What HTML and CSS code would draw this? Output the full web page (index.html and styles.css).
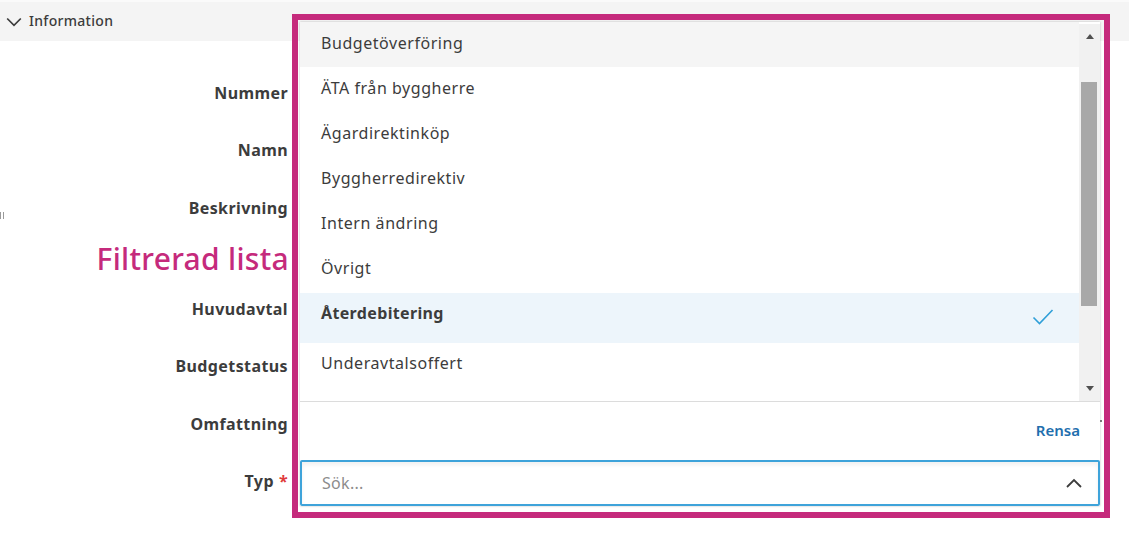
FILE: index.html
```html
<!DOCTYPE html>
<html lang="sv">
<head>
<meta charset="utf-8">
<title>Information</title>
<link rel="stylesheet" href="styles.css">
</head>
<body>
<div class="page">
  <div class="section-header">
    <svg class="chev" width="16" height="10" viewBox="0 0 16 10"><path d="M1.2 1.5 L8 8.3 L14.8 1.5" fill="none" stroke="#3c3c3c" stroke-width="1.7"/></svg>
    <span>Information</span>
  </div>
  <div class="handle"><i></i><i></i></div>
  <div class="form">
    <div class="row"><div class="label">Nummer</div></div>
    <div class="row"><div class="label">Namn</div></div>
    <div class="row tall">
      <div class="label">Beskrivning</div>
      <div class="annot">Filtrerad lista</div>
    </div>
    <div class="row"><div class="label">Huvudavtal</div></div>
    <div class="row"><div class="label">Budgetstatus</div></div>
    <div class="row"><div class="label">Omfattning</div></div>
    <div class="row"><div class="label">Typ <span class="req">*</span></div></div>
  </div>

  <div class="frame"></div>

  <div class="dropdown">
    <div class="list-area">
      <ul class="list">
        <li class="item hover">Budgetöverföring</li>
        <li class="item">ÄTA från byggherre</li>
        <li class="item">Ägardirektinköp</li>
        <li class="item">Byggherredirektiv</li>
        <li class="item">Intern ändring</li>
        <li class="item">Övrigt</li>
        <li class="item selected"><span>Återdebitering</span>
          <svg class="check" width="22" height="18" viewBox="0 0 22 18"><path d="M1.5 9.5 L7.5 15.5 L20.5 2" fill="none" stroke="#2f9fd8" stroke-width="1.6"/></svg>
        </li>
        <li class="item after">Underavtalsoffert</li>
      </ul>
      <div class="scrollbar">
        <div class="arrow up"></div>
        <div class="track"><div class="thumb"></div></div>
        <div class="arrow down"></div>
      </div>
    </div>
    <div class="footer"><span class="clear">Rensa</span></div>
    <div class="search">
      <span class="placeholder">Sök...</span>
      <svg width="18" height="12" viewBox="0 0 18 12"><path d="M2 10 L9 3 L16 10" fill="none" stroke="#3c3c3c" stroke-width="1.8"/></svg>
    </div>
  </div>
  <span class="dot"></span>
</div>
</body>
</html>
```

FILE: styles.css
```css
* { box-sizing: border-box; }
html, body { margin: 0; padding: 0; background: #ffffff; }
body {
  font-family: "Noto Sans", "Open Sans", sans-serif;
  color: #3c3c3c;
  width: 1129px;
  height: 538px;
  overflow: hidden;
}
.page { position: relative; width: 1129px; height: 538px; }

.section-header {
  height: 41px;
  background: #f4f4f4;
  display: flex;
  align-items: center;
  gap: 7px;
  padding-left: 6px;
  padding-bottom: 2px;
  font-size: 14px;
  letter-spacing: 0.3px;
  font-weight: 500;
  color: #3c3c3c;
  border-top: 2px solid #fafafa;
}
.chev { flex: none; margin-top: 2px; }

.handle {
  position: absolute;
  left: 0;
  top: 212px;
  display: flex;
  gap: 2px;
}
.handle i { display: block; width: 1px; height: 7px; background: #9a9a9a; }

.form {
  padding-top: 23px;
  display: flex;
  flex-direction: column;
}
.row {
  height: 57.5px;
  display: flex;
  flex-direction: column;
  width: 288px;
}
.row.tall { height: 101px; }
.label {
  height: 57.5px;
  display: flex;
  align-items: center;
  justify-content: flex-end;
  font-size: 16px;
  letter-spacing: 0.4px;
  font-weight: 700;
  color: #3c3c3c;
  gap: 5px;
}
.req { color: #e03a3a; }
.annot {
  height: 43px;
  display: flex;
  align-items: center;
  justify-content: flex-end;
  font-size: 30px;
  letter-spacing: 0.3px;
  font-weight: 500;
  color: #c52a7c;
  margin-right: -1px;
}

.frame {
  position: absolute;
  left: 292px;
  top: 14px;
  width: 818px;
  height: 504px;
  border: 6px solid #c52a7c;
}

.dropdown {
  position: absolute;
  left: 300px;
  top: 22px;
  width: 800px;
  height: 484px;
  background: #fff;
  display: flex;
  flex-direction: column;
  box-shadow: 0 0 2px rgba(0,0,0,0.25);
}
.list-area {
  height: 380px;
  display: flex;
  border-bottom: 1px solid #dcdcdc;
}
.list {
  list-style: none;
  margin: 0;
  padding: 0;
  flex: 1;
  overflow: hidden;
}
.item {
  height: 45px;
  display: flex;
  align-items: center;
  justify-content: space-between;
  padding: 0 25px 3px 21px;
  font-size: 16px;
  letter-spacing: 0.55px;
  color: #3c3c3c;
}
.item.hover { background: #f5f5f5; }
.item.selected {
  height: 50px;
  padding-bottom: 10px;
  padding-top: 0;
  background: #edf5fb;
  font-weight: 700;
  letter-spacing: 0.35px;
  margin-top: 1px;
}
.item.selected .check { margin-top: 8px; }
.item.after { padding-bottom: 5px; }

.scrollbar {
  width: 21px;
  background: #f1f1f1;
  display: flex;
  flex-direction: column;
  align-items: center;
  margin-top: 2px;
}
.arrow { width: 0; height: 0; border-left: 4px solid transparent; border-right: 4px solid transparent; }
.arrow.up { border-bottom: 5px solid #505050; margin: 10px 0 0; }
.arrow.down { border-top: 5px solid #505050; margin: 0 0 10px; }
.track { flex: 1; width: 100%; position: relative; }
.thumb {
  position: absolute;
  left: 2px;
  right: 3px;
  top: 43px;
  height: 224px;
  background: #a8a8a8;
}

.footer {
  height: 58px;
  display: flex;
  align-items: center;
  justify-content: flex-end;
  padding-right: 20px;
  padding-bottom: 2px;
}
.clear { color: #1f6fae; font-size: 15px; font-weight: 600; }

.search {
  height: 46px;
  border: 2px solid #3ea3da;
  border-radius: 2px;
  display: flex;
  align-items: center;
  justify-content: space-between;
  padding: 0 15px 0 20px;
  box-shadow: inset 0 3px 4px rgba(0,0,0,0.06);
}
.placeholder { color: #8c8c8c; font-size: 16px; letter-spacing: 0.3px; }

.dot {
  position: absolute;
  left: 1100px;
  top: 420px;
  width: 2px;
  height: 2px;
  background: #777;
}
```
